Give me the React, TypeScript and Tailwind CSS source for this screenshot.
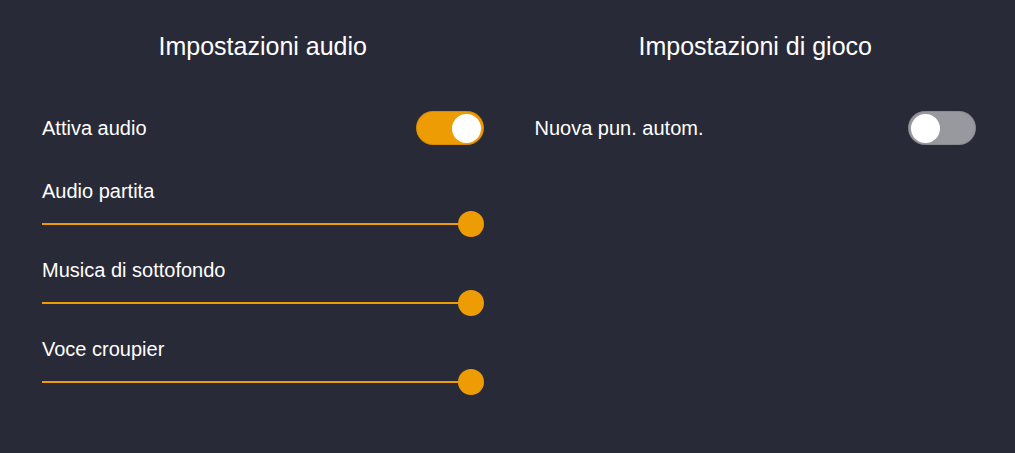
import { useState } from 'react';

const ORANGE = 'bg-[#ee9c04]';

const Toggle = ({ on, onChange }: { on: boolean; onChange: () => void }) => (
  <button
    onClick={onChange}
    className={`flex h-[34px] w-[68px] items-center rounded-full border border-black/10 px-[2px] ${
      on ? `${ORANGE} justify-end` : 'bg-[#98989f] justify-start'
    }`}
  >
    <span className="h-[29px] w-[29px] rounded-full bg-white" />
  </button>
);

const Slider = ({ label }: { label: string }) => (
  <div className="flex flex-col">
    <span className="text-[20px] leading-[23px] text-white">{label}</span>
    <div className="mt-[8px] flex h-[26px] items-center">
      <div className={`h-[2px] flex-1 ${ORANGE}`} />
      <div className={`-ml-[13px] h-[26px] w-[26px] rounded-full ${ORANGE}`} />
    </div>
  </div>
);

const App = () => {
  const [audio, setAudio] = useState(true);
  const [autoBet, setAutoBet] = useState(false);

  return (
    <div
      className="h-[453px] w-full bg-[#292a38] pl-[42px] pr-[39px] pt-[32px]"
      style={{ fontFamily: '"Liberation Sans", Arial, sans-serif' }}
    >
      <div className="grid grid-cols-2 gap-[51px]">
        {/* Audio */}
        <div className="flex flex-col">
          <h2 className="text-center text-[25px] leading-[29px] text-white">Impostazioni audio</h2>
          <div className="mt-[50px] flex items-center justify-between">
            <span className="text-[20px] leading-[23px] text-white">Attiva audio</span>
            <Toggle on={audio} onChange={() => setAudio(!audio)} />
          </div>
          <div className="mt-[35px] flex flex-col gap-[22px]">
            <Slider label="Audio partita" />
            <Slider label="Musica di sottofondo" />
            <Slider label="Voce croupier" />
          </div>
        </div>

        {/* Game */}
        <div className="flex flex-col">
          <h2 className="text-center text-[25px] leading-[29px] text-white">Impostazioni di gioco</h2>
          <div className="mt-[50px] flex items-center justify-between">
            <span className="text-[20px] leading-[23px] text-white">Nuova pun. autom.</span>
            <Toggle on={autoBet} onChange={() => setAutoBet(!autoBet)} />
          </div>
        </div>
      </div>
    </div>
  );
};

export default App;
